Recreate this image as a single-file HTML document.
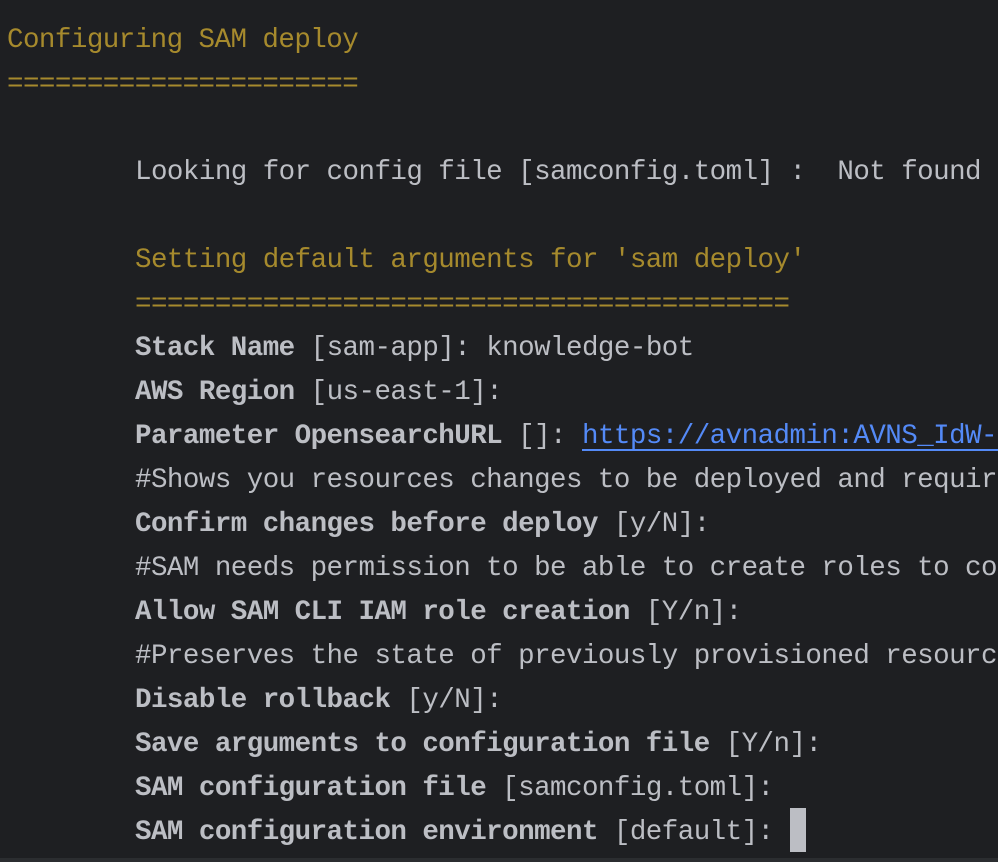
<!DOCTYPE html>
<html lang="en">
<head>
<meta charset="utf-8">
<title>Configuring SAM deploy</title>
<style>
html,body{margin:0;padding:0;background:#1e1f22;}
#t{position:relative;width:998px;height:862px;overflow:hidden;background:#1e1f22;
font-family:"Liberation Mono",monospace;font-size:27.5px;letter-spacing:-0.54px;color:#bcbec4;}
.l{position:absolute;left:7px;height:44px;line-height:44px;white-space:pre;}
.i{left:135px;}
.y{color:#a68a2d;}
b{font-weight:700;}
.u{position:absolute;left:582px;top:449px;width:416px;height:2px;background:#548af7;}
.k{color:#548af7;}
.c{position:absolute;left:790px;top:808px;width:16px;height:44px;background:#bcbec4;}
.s{position:absolute;left:0;top:858px;width:998px;height:4px;background:#2b2d30;}
</style>
</head>
<body>
<div id="t">
<div class="l y" style="top:19px">Configuring SAM deploy</div>
<div class="l y" style="top:63px">======================</div>
<div class="l i" style="top:151px">Looking for config file [samconfig.toml] :  Not found</div>
<div class="l i y" style="top:239px">Setting default arguments for 'sam deploy'</div>
<div class="l i y" style="top:283px">=========================================</div>
<div class="l i" style="top:327px"><b>Stack Name</b> [sam-app]: knowledge-bot</div>
<div class="l i" style="top:371px"><b>AWS Region</b> [us-east-1]:</div>
<div class="l i" style="top:415px"><b>Parameter OpensearchURL</b> []: <span class="k">https://avnadmin:AVNS_IdW-xxxxxxxxxx</span></div>
<div class="u"></div>
<div class="l i" style="top:459px">#Shows you resources changes to be deployed and require a changeset</div>
<div class="l i" style="top:503px"><b>Confirm changes before deploy</b> [y/N]:</div>
<div class="l i" style="top:547px">#SAM needs permission to be able to create roles to connect to the resources</div>
<div class="l i" style="top:591px"><b>Allow SAM CLI IAM role creation</b> [Y/n]:</div>
<div class="l i" style="top:635px">#Preserves the state of previously provisioned resources</div>
<div class="l i" style="top:679px"><b>Disable rollback</b> [y/N]:</div>
<div class="l i" style="top:723px"><b>Save arguments to configuration file</b> [Y/n]:</div>
<div class="l i" style="top:767px"><b>SAM configuration file</b> [samconfig.toml]:</div>
<div class="l i" style="top:811px"><b>SAM configuration environment</b> [default]:</div>
<div class="c"></div>
<div class="s"></div>
</div>
</body>
</html>
